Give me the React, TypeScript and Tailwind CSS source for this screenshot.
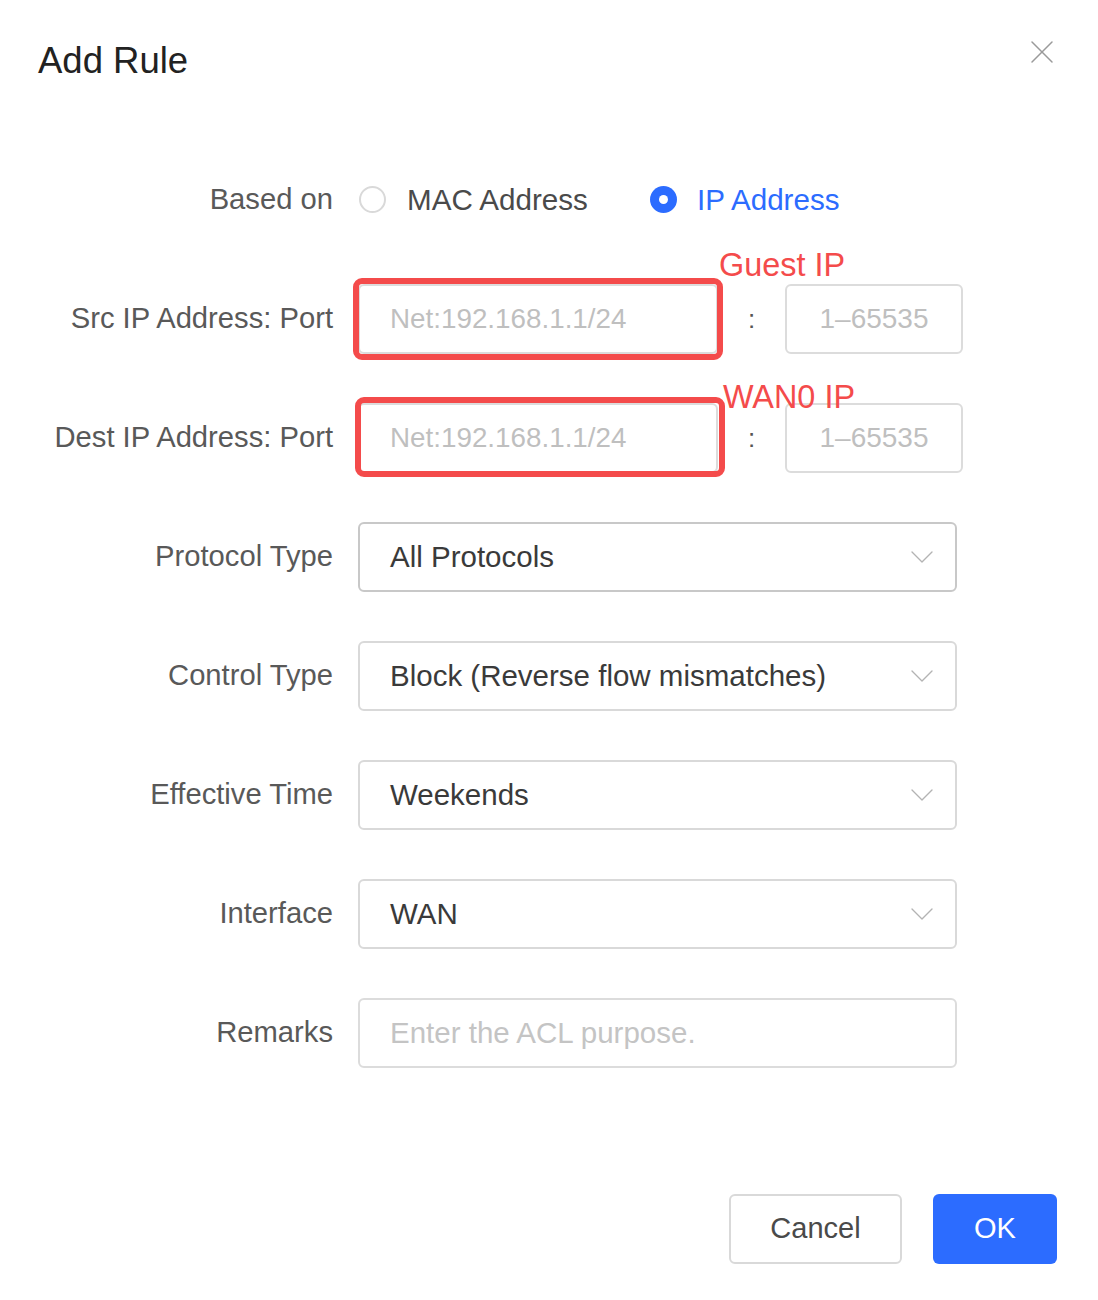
import { ChevronDown, X } from 'lucide-react'

const font = { fontFamily: '"Liberation Sans", Arial, sans-serif' }

function Label({ text }: { text: string }) {
    return <div className="w-[333px] shrink-0 text-right text-[29.2px] text-[#595959]">{text}</div>
}

function Select({ value, dark }: { value: string, dark?: boolean }) {
    return (
        <div className={`flex h-[70px] w-[599px] items-center justify-between rounded-[6px] border-2 pl-[30px] pr-[13px] text-[29.5px] text-[#3a3a3a] ${dark ? 'border-[#c8c8c8]' : 'border-[#d9d9d9]'}`}>
            <span>{value}</span>
            <ChevronDown className="h-[40px] w-[40px] text-[#b3b3b3]" strokeWidth={0.8} />
        </div>
    )
}

function IpRow({ label, note, box, noteTop, noteLeft }: { label: string, note: string, box: string, noteTop: string, noteLeft: string }) {
    return (
        <div className="flex items-center">
            <Label text={label} />
            <div className="relative ml-[25px] flex h-[70px] w-[360px] items-center rounded-[6px] border-2 border-[#dcdcdc] pl-[30px] text-[27.8px] text-[#bfbfbf]">
                Net:192.168.1.1/24
                <div className={`pointer-events-none absolute rounded-[9px] border-[6px] border-[#f44b4b] ${box}`} />
                <div className={`absolute whitespace-nowrap text-[32.4px] leading-none text-[#f44b4b] ${noteTop} ${noteLeft}`}>{note}</div>
            </div>
            <div className="w-[67px] text-center text-[26px] text-[#555]">:</div>
            <div className="flex h-[70px] w-[178px] items-center justify-center rounded-[6px] border-2 border-[#dcdcdc] text-[28px] text-[#bfbfbf]">
                1–65535
            </div>
        </div>
    )
}

export default function App() {
    return (
        <div className="relative min-h-[1300px] w-[1098px] bg-white" style={font}>
            <div className="flex items-start justify-between pl-[38px] pr-[36px] pt-[39px]">
                <h1 className="text-[36.5px] leading-[43px] text-[#222]">Add Rule</h1>
                <X className="mt-[-7px] h-[40px] w-[40px] text-[#9a9a9a]" strokeWidth={0.9} />
            </div>

            <div className="mt-[83px] flex flex-col gap-[49px]">
                <div className="flex h-[70px] items-center">
                    <Label text="Based on" />
                    <div className="ml-[26px] flex items-center text-[29.6px]">
                        <span className="h-[27px] w-[27px] rounded-full border-2 border-[#d9d9d9]" />
                        <span className="ml-[21px] text-[#4a4a4a]">MAC Address</span>
                        <span className="ml-[62px] flex h-[27px] w-[27px] items-center justify-center rounded-full bg-[#2c6cff]">
                            <span className="h-[9px] w-[9px] rounded-full bg-white" />
                        </span>
                        <span className="ml-[20px] text-[#2c6cff]">IP Address</span>
                    </div>
                </div>

                <IpRow label="Src IP Address: Port" note="Guest IP" box="-left-[7px] -right-[7px] -top-[8px] -bottom-[8px]" noteTop="-top-[37px]" noteLeft="left-[359px]" />
                <IpRow label="Dest IP Address: Port" note="WAN0 IP" box="-left-[5px] -right-[9px] -top-[8px] -bottom-[6px]" noteTop="-top-[24px]" noteLeft="left-[363px]" />

                <div className="flex items-center">
                    <Label text="Protocol Type" />
                    <div className="ml-[25px]"><Select value="All Protocols" dark /></div>
                </div>
                <div className="flex items-center">
                    <Label text="Control Type" />
                    <div className="ml-[25px]"><Select value="Block (Reverse flow mismatches)" /></div>
                </div>
                <div className="flex items-center">
                    <Label text="Effective Time" />
                    <div className="ml-[25px]"><Select value="Weekends" /></div>
                </div>
                <div className="flex items-center">
                    <Label text="Interface" />
                    <div className="ml-[25px]"><Select value="WAN" /></div>
                </div>
                <div className="flex items-center">
                    <Label text="Remarks" />
                    <div className="ml-[25px] flex h-[70px] w-[599px] items-center rounded-[6px] border-2 border-[#dcdcdc] pl-[30px] text-[29.5px] text-[#c4c4c4]">
                        Enter the ACL purpose.
                    </div>
                </div>
            </div>

            <div className="mt-[126px] flex justify-end gap-[31px] pr-[41px]">
                <button className="h-[70px] w-[173px] rounded-[6px] border-2 border-[#d9d9d9] bg-white text-[29px] text-[#4a4a4a]">Cancel</button>
                <button className="h-[70px] w-[124px] rounded-[6px] bg-[#2c6cff] text-[29px] text-white">OK</button>
            </div>
        </div>
    )
}
